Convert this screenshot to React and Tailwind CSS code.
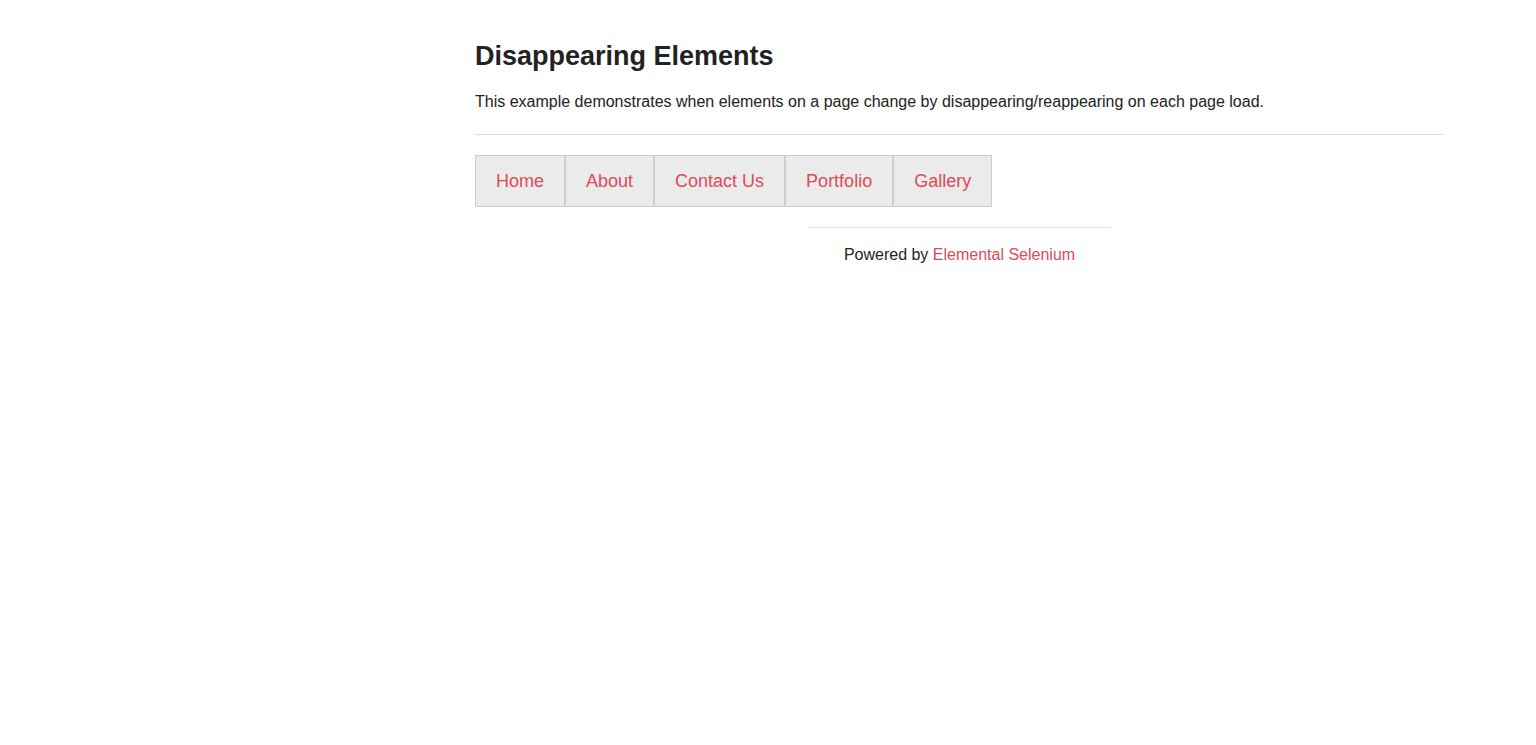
import React from 'react';

const links = ['Home', 'About', 'Contact Us', 'Portfolio', 'Gallery'];

export default function App() {
  return (
    <div className="min-h-screen bg-white font-['Liberation_Sans',Arial,sans-serif] text-[#222]">
      <div className="w-[969px] ml-[475px] pt-[38px]">
        <h3 className="text-[27px] font-bold leading-[36px] text-[#222]">Disappearing Elements</h3>
        <p className="mt-[16px] text-[16px] leading-[24px]">
          This example demonstrates when elements on a page change by disappearing/reappearing on each page load.
        </p>
        <hr className="mt-[20px] border-t border-[#ddd]" />
        <ul className="mt-[20px] flex">
          {links.map((l) => (
            <li key={l} className="border border-[#ccc] bg-[#ebebeb]">
              <a href="#" className="block px-[20px] leading-[50px] text-[18px] text-[#de4a58]">
                {l}
              </a>
            </li>
          ))}
        </ul>
        <div className="flex justify-center mt-[20px]">
          <div className="w-[303px]">
            <hr className="border-t border-[#ddd]" />
            <div className="text-center mt-[17px] text-[16px] leading-[20px]">
              Powered by <a href="#" className="text-[#de4a58]">Elemental Selenium</a>
            </div>
          </div>
        </div>
      </div>
    </div>
  );
}
